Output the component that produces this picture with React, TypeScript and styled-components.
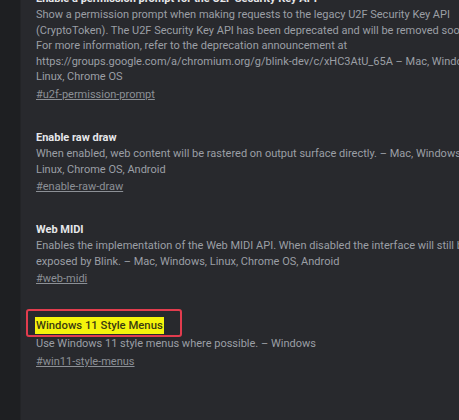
import styled, { createGlobalStyle } from 'styled-components'

const GlobalStyle = createGlobalStyle`
  html, body {
    margin: 0;
    padding: 0;
    background: #28292d;
    overflow: hidden;
  }
`

const Page = styled.div`
  display: flex;
  width: 459px;
  height: 420px;
  overflow: hidden;
  background: #28292d;
  font-family: Roboto, 'Liberation Sans', sans-serif;
`

const SideStrip = styled.div`
  width: 20px;
  flex: 0 0 20px;
  background: #1e1f22;
  border-right: 1px solid #232427;
`

const FlagList = styled.div`
  display: flex;
  flex-direction: column;
  gap: 28px;
  padding-left: 15px;
  margin-top: -9px;
  min-width: 0;
`

const Flag = styled.div<{ $found?: boolean }>`
  display: flex;
  flex-direction: column;
  margin-top: ${(p) => (p.$found ? '3px' : '0')};
`

const TitleRow = styled.div<{ $found?: boolean }>`
  display: flex;
  align-items: center;
  margin-bottom: ${(p) => (p.$found ? '2px' : '0')};
`

const Title = styled.div<{ $found?: boolean }>`
  font-size: 11px;
  line-height: 16px;
  font-weight: ${(p) => (p.$found ? 500 : 700)};
  color: ${(p) => (p.$found ? '#3b3b10' : '#e6e7ea')};
  white-space: nowrap;
  ${(p) =>
    p.$found &&
    `
    position: relative;
    background: #f4f40c;
    padding: 0 1px;
    margin-left: -1px;
    font-size: 11.3px;
    line-height: 17px;
    &::after {
      content: '';
      position: absolute;
      left: -9px;
      right: -18px;
      top: -8px;
      bottom: -3px;
      border: 2px solid #e23c4e;
      border-radius: 3px;
    }
  `}
`

const Description = styled.div`
  font-size: 11px;
  line-height: 15.6px;
  color: #9b9fa5;
  white-space: nowrap;
`

const Anchor = styled.a`
  display: block;
  margin-top: 2px;
  font-size: 11px;
  line-height: 15px;
  color: #8c9096;
  text-decoration: underline;
  white-space: nowrap;
`

type FlagItem = {
  title: string
  lines: string[]
  anchor: string
  found?: boolean
}

const flags: FlagItem[] = [
  {
    title: 'Enable a permission prompt for the U2F Security Key API',
    lines: [
      'Show a permission prompt when making requests to the legacy U2F Security Key API',
      '(CryptoToken). The U2F Security Key API has been deprecated and will be removed soon.',
      'For more information, refer to the deprecation announcement at',
      'https://groups.google.com/a/chromium.org/g/blink-dev/c/xHC3AtU_65A – Mac, Windows,',
      'Linux, Chrome OS',
    ],
    anchor: '#u2f-permission-prompt',
  },
  {
    title: 'Enable raw draw',
    lines: [
      'When enabled, web content will be rastered on output surface directly. – Mac, Windows,',
      'Linux, Chrome OS, Android',
    ],
    anchor: '#enable-raw-draw',
  },
  {
    title: 'Web MIDI',
    lines: [
      'Enables the implementation of the Web MIDI API. When disabled the interface will still be',
      'exposed by Blink. – Mac, Windows, Linux, Chrome OS, Android',
    ],
    anchor: '#web-midi',
  },
  {
    title: 'Windows 11 Style Menus',
    lines: ['Use Windows 11 style menus where possible. – Windows'],
    anchor: '#win11-style-menus',
    found: true,
  },
]

export default function App() {
  return (
    <>
      <GlobalStyle />
      <Page>
        <SideStrip />
        <FlagList>
          {flags.map((flag) => (
            <Flag key={flag.anchor} $found={flag.found}>
              <TitleRow $found={flag.found}>
                <Title $found={flag.found}>{flag.title}</Title>
              </TitleRow>
              <Description>
                {flag.lines.map((line, i) => (
                  <div key={i}>{line}</div>
                ))}
              </Description>
              <Anchor href={flag.anchor}>{flag.anchor}</Anchor>
            </Flag>
          ))}
        </FlagList>
      </Page>
    </>
  )
}
